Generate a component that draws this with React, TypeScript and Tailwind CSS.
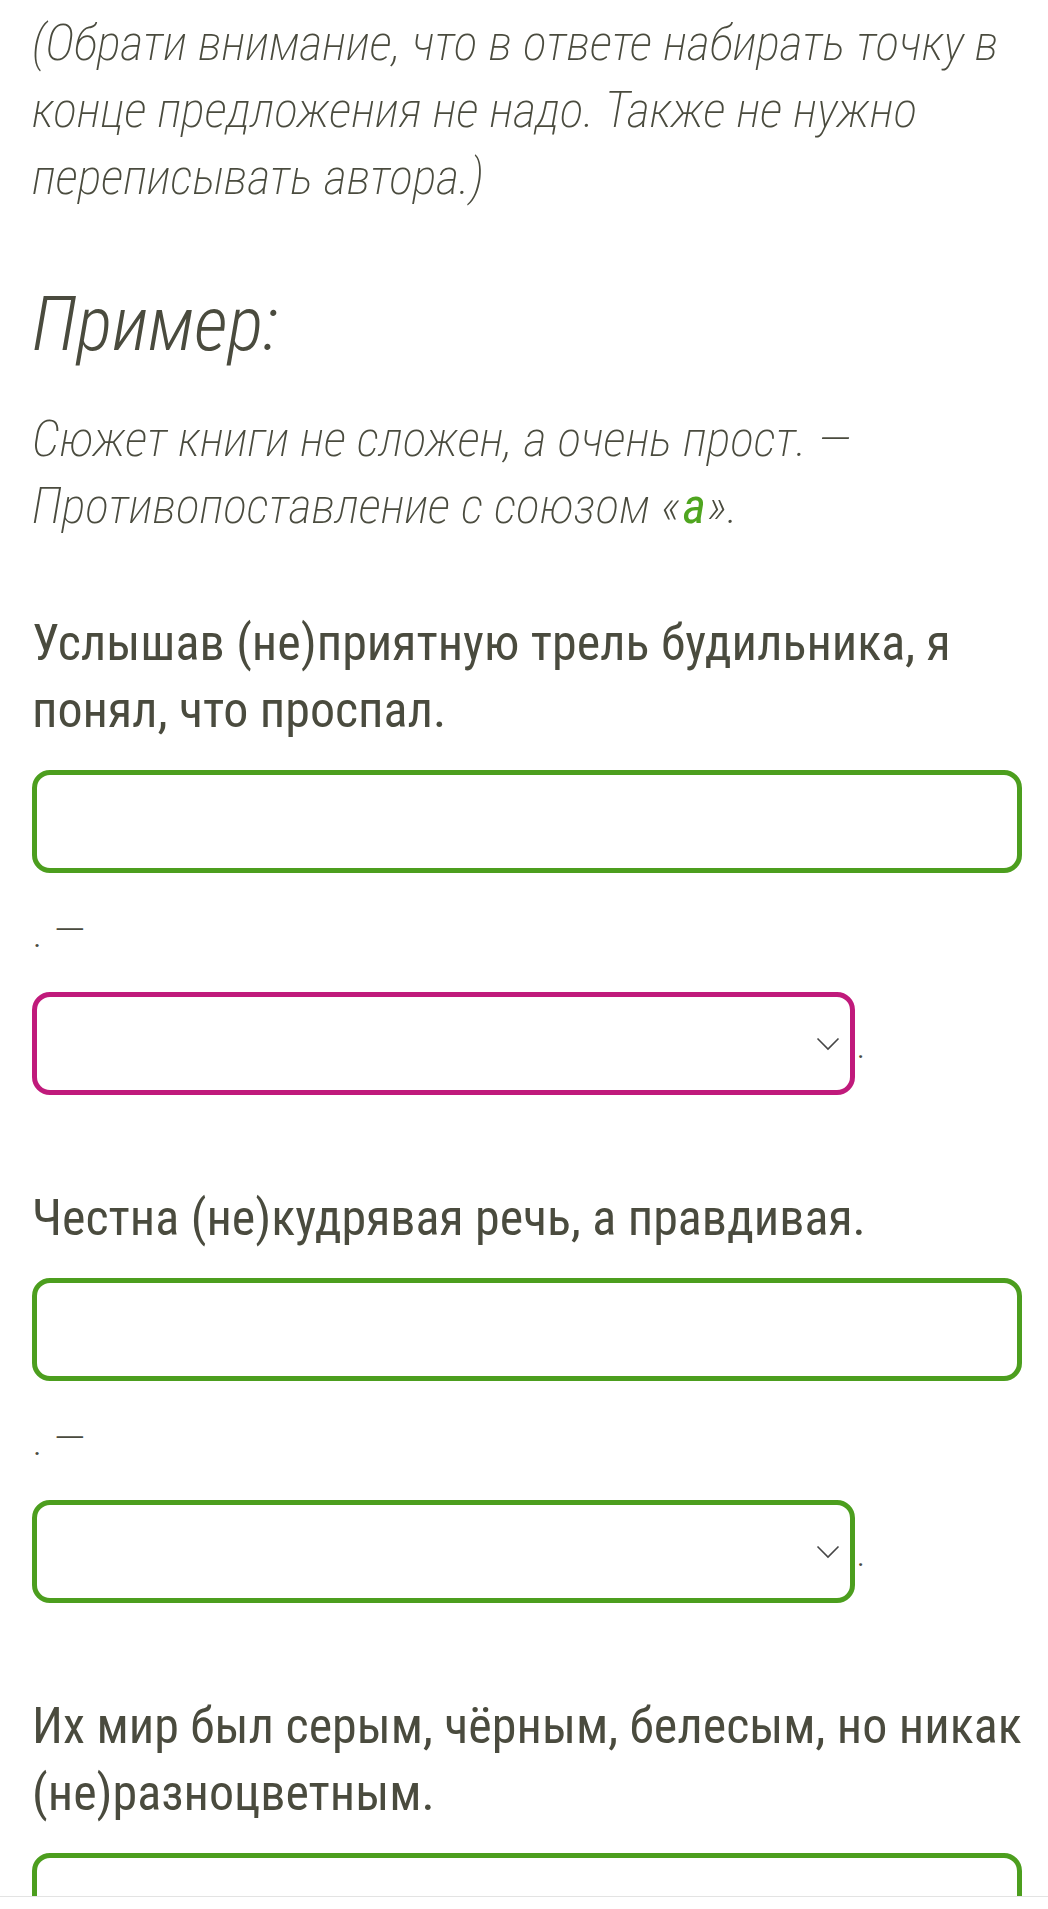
const ink = "text-[#4a4b3e]";

function Chevron() {
  return (
    <svg width="24" height="14" viewBox="0 0 24 14" fill="none" className="shrink-0">
      <polyline points="1.5,1.5 12,12 22.5,1.5" stroke="#464646" strokeWidth="1.6" />
    </svg>
  );
}

type Question = {
  text: string;
  selectBorder: string;
};

function QuestionBlock({ q }: { q: Question }) {
  return (
    <div className="mt-[90px]">
      <p className={`text-[50px] font-[365] leading-[67px] ${ink}`}>{q.text}</p>
      <div className="mt-[26px] h-[103px] w-full rounded-[18px] border-[5px] border-[#4c9e1e] bg-white" />
      <div className={`mt-[24px] text-[48px] font-extralight leading-[67px] ${ink}`}>. —</div>
      <div className="mt-[28px] flex items-start">
        <div
          className={`flex h-[103px] w-[823px] items-center justify-end rounded-[18px] border-[5px] bg-white pr-[10px] ${q.selectBorder}`}
        >
          <Chevron />
        </div>
        <span className={`ml-[1px] mt-[27px] text-[44px] font-extralight leading-[48px] ${ink}`}>.</span>
      </div>
    </div>
  );
}

const questions: Question[] = [
  {
    text: "Услышав (не)приятную трель будильника, я понял, что проспал.",
    selectBorder: "border-[#c01a7b]",
  },
  {
    text: "Честна (не)кудрявая речь, а правдивая.",
    selectBorder: "border-[#4c9e1e]",
  },
];

export default function App() {
  return (
    <div className="bg-white [font-family:'Roboto_Condensed',Roboto,sans-serif]">
      <div className="h-[1897px] overflow-hidden border-b border-[#e3e3e3] pl-[32px] pr-[26px]">
        <p className={`pt-[10px] text-[50px] font-extralight italic leading-[67px] ${ink}`}>
          (Обрати внимание, что в ответе набирать точку в конце предложения не надо. Также не
          нужно переписывать автора.)
        </p>

        <h2 className={`mt-[71px] text-[75px] font-[350] italic leading-[84px] ${ink}`}>Пример:</h2>

        <p className={`mt-[40px] text-[50px] font-extralight italic leading-[67px] ${ink}`}>
          Сюжет книги не сложен, а очень прост. — Противопоставление с союзом «
          <span className="mx-[2px] font-normal text-[#4fa51f]">а</span>».
        </p>

        <div className="-mt-[20px]">
          {questions.map((q) => (
            <QuestionBlock key={q.text} q={q} />
          ))}
        </div>

        <div className="mt-[90px]">
          <p className={`text-[50px] font-[365] leading-[67px] ${ink}`}>
            Их мир был серым, чёрным, белесым, но никак (не)разноцветным.
          </p>
          <div className="mt-[26px] h-[103px] w-full rounded-[18px] border-[5px] border-[#4c9e1e] bg-white" />
        </div>
      </div>
    </div>
  );
}
